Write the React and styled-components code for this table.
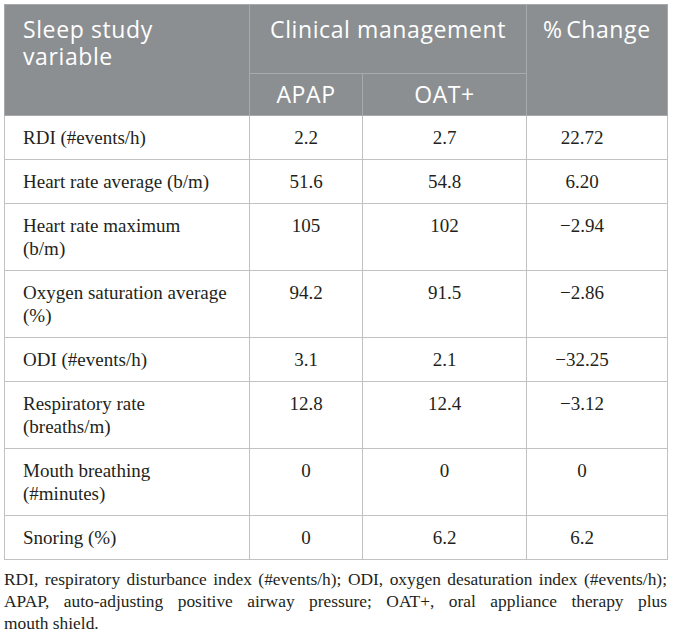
import React from "react";
import styled, { createGlobalStyle } from "styled-components";

const GlobalStyle = createGlobalStyle`
  body {
    margin: 0;
    background: #fff;
  }
`;

const Page = styled.div`
  padding: 4px 6px 0 4px;
  width: 663px;
`;

const Table = styled.table`
  width: 663px;
  border-collapse: collapse;
  table-layout: fixed;
  border: 1px solid #c2c2c2;
`;

const HeadCell = styled.th`
  background: #8b8f92;
  color: #fff;
  font-family: "Open Sans", "Liberation Sans", sans-serif;
  font-weight: 400;
  font-size: 23px;
  letter-spacing: 0.6px;
  line-height: 27px;
  text-align: ${(p) => p.align || "left"};
  vertical-align: ${(p) => p.valign || "top"};
  height: ${(p) => p.h}px;
  padding: ${(p) => p.pad || "11px 18px 0"};
  border: 1px solid #a7aaac;
  box-sizing: border-box;
`;

const Row = styled.tr`
  border-top: 1px solid #c2c2c2;
`;

const Cell = styled.td`
  font-family: "Liberation Serif", "Times New Roman", serif;
  font-size: 19px;
  line-height: 23px;
  color: #231f20;
  vertical-align: top;
  white-space: nowrap;
  padding: ${(p) => p.pad || "10px 18px"};
  text-align: ${(p) => p.align || "center"};
  border: 1px solid #c2c2c2;
`;

const Footnote = styled.div`
  margin-top: 8px;
  font-family: "Liberation Serif", "Times New Roman", serif;
  font-size: 17.4px;
  line-height: 22px;
  color: #231f20;
  width: 663px;
`;

const FootLine = styled.div`
  white-space: nowrap;
  text-align: ${(p) => (p.justify ? "justify" : "left")};
  text-align-last: ${(p) => (p.justify ? "justify" : "left")};
`;

const rows = [
  [["RDI (#events/h)"], "2.2", "2.7", "22.72"],
  [["Heart rate average (b/m)"], "51.6", "54.8", "6.20"],
  [["Heart rate maximum", "(b/m)"], "105", "102", "\u22122.94"],
  [["Oxygen saturation average", "(%)"], "94.2", "91.5", "\u22122.86"],
  [["ODI (#events/h)"], "3.1", "2.1", "\u221232.25"],
  [["Respiratory rate", "(breaths/m)"], "12.8", "12.4", "\u22123.12"],
  [["Mouth breathing", "(#minutes)"], "0", "0", "0"],
  [["Snoring (%)"], "0", "6.2", "6.2"],
];

function Label({ lines }) {
  return lines.map((line, i) => (
    <React.Fragment key={line}>
      {i > 0 && <br />}
      {line}
    </React.Fragment>
  ));
}

export default function App() {
  return (
    <>
      <GlobalStyle />
      <Page>
        <Table>
          <colgroup>
            <col style={{ width: 245 }} />
            <col style={{ width: 113 }} />
            <col style={{ width: 164 }} />
            <col style={{ width: 141 }} />
          </colgroup>
          <thead>
            <tr>
              <HeadCell rowSpan={2} h={69}>
                Sleep study variable
              </HeadCell>
              <HeadCell colSpan={2} h={69} align="center">
                Clinical management
              </HeadCell>
              <HeadCell rowSpan={2} h={69} pad="11px 4px 0 16px">
                %&#8239;Change
              </HeadCell>
            </tr>
            <tr>
              <HeadCell h={42} align="center" valign="middle" pad="0 8px">
                APAP
              </HeadCell>
              <HeadCell h={42} align="center" valign="middle" pad="0 8px">
                OAT+
              </HeadCell>
            </tr>
          </thead>
          <tbody>
            {rows.map(([label, apap, oat, change]) => (
              <Row key={label[0]}>
                <Cell align="left" pad="10px 6px 10px 18px">
                  <Label lines={label} />
                </Cell>
                <Cell>{apap}</Cell>
                <Cell>{oat}</Cell>
                <Cell pad="10px 47px 10px 17px">{change}</Cell>
              </Row>
            ))}
          </tbody>
        </Table>
        <Footnote>
          <FootLine justify>
            RDI, respiratory disturbance index (#events/h); ODI, oxygen desaturation index (#events/h);
          </FootLine>
          <FootLine justify>
            APAP, auto-adjusting positive airway pressure; OAT+, oral appliance therapy plus
          </FootLine>
          <FootLine>mouth shield.</FootLine>
        </Footnote>
      </Page>
    </>
  );
}
